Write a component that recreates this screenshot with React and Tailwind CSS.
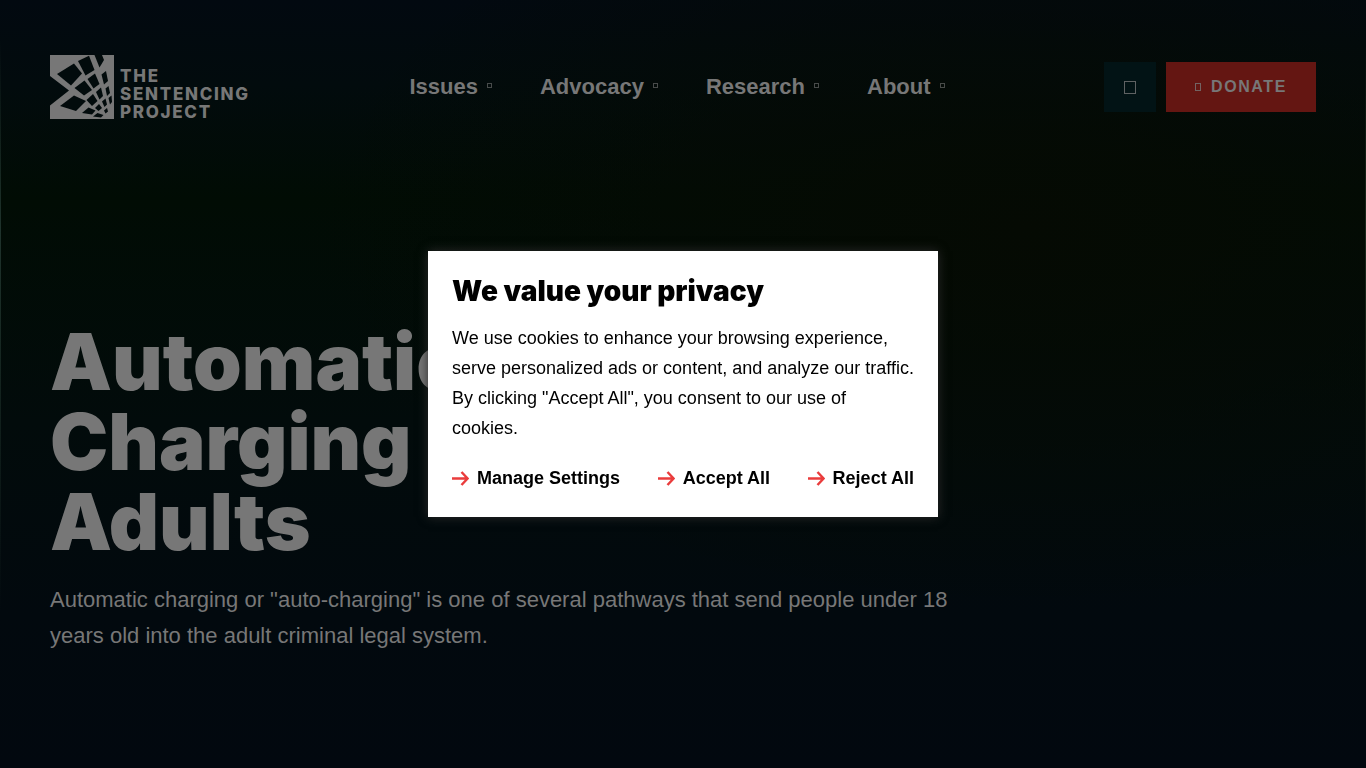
import { useState } from 'react'

const navItems = ['Issues', 'Advocacy', 'Research', 'About']

function Logo() {
    return (
        <a href="#" aria-label="The Sentencing Project" className="flex h-16 w-[200px] shrink-0 gap-[6px] text-[#777777]">
            <svg viewBox="0 0 64 64" className="h-16 w-16 shrink-0" aria-hidden="true">
                <path d="M0 0H64V64H0V50.500L19 35.500L0 21Z" fill="currentColor" />
                <g fill="#020b0c">
                    <path d="M7 19L24 8.500L32 18.500L21 30.500Z" />
                    <path d="M28 6L39 0.700L44.500 15L35.500 20.500Z" />
                    <path d="M44.500 0H52L54 5L49.500 12.500Z" />
                    <path d="M24.500 33L34.500 25.500L42 35L34 40.500Z" />
                    <path d="M37.500 24L45 18.500L49.500 29L43.500 33.500Z" />
                    <path d="M51.500 19.500L56 16L58 26L54 29.500Z" />
                    <path d="M10 51L24 40.500L36 46L26 56Z" />
                    <path d="M36.500 45L43 39L47.500 46L42 51Z" />
                    <path d="M46 37L51 32.500L53 41L49.500 44.500Z" />
                    <path d="M55.500 33.500L58.500 31L60 38L57 41Z" />
                    <path d="M32 58L38.500 52.500L45.500 55.500L42 59.500Z" />
                    <path d="M45 53L49 49L52 53L48.500 56Z" />
                    <path d="M52 46.500L55.500 43.500L57 49.500L54.500 52Z" />
                    <path d="M58.500 43L61.500 40.500L62 47L60 49.500Z" />
                    <path d="M43 61.500L47.500 58L53.500 60L51 62.500Z" />
                    <path d="M54 55.500L57 53L58 56.500L55.500 58.500Z" />
                </g>
            </svg>
            <span className="flex flex-col pt-3 font-['Inter',sans-serif] text-[17px] leading-[18px] font-extrabold tracking-widest">
                <span>THE</span>
                <span>SENTENCING</span>
                <span>PROJECT</span>
            </span>
        </a>
    )
}

function ArrowButton({ label, onClick }) {
    return (
        <button type="button" onClick={onClick} className="flex items-center gap-2 text-lg leading-[30px] font-bold whitespace-nowrap text-black">
            <svg viewBox="0 0 17 16" className="h-4 w-[17px]" fill="none" stroke="#ea3c3c" strokeWidth="2.5" aria-hidden="true">
                <path d="M0 8.500H15.500M9.500 2L15.600 8.500L9.500 15" />
            </svg>
            {label}
        </button>
    )
}

function PrivacyDialog({ onClose }) {
    return (
        <div className="fixed inset-0 flex items-center justify-center">
            <section role="dialog" aria-labelledby="privacyTitle" className="w-[510px] bg-white p-6 text-black shadow-[0_0_10px_#2b2b2b]">
                <h2 id="privacyTitle" className="font-['Inter',sans-serif] text-[28px] leading-8 font-black">We value your privacy</h2>
                <p className="mt-4 text-lg leading-[30px]">
                    We use cookies to enhance your browsing experience, serve personalized ads or content, and analyze our traffic. By clicking "Accept All", you consent to our use of cookies.
                </p>
                <div className="mt-5 flex justify-between">
                    <ArrowButton label="Manage Settings" />
                    <ArrowButton label="Accept All" onClick={onClose} />
                    <ArrowButton label="Reject All" onClick={onClose} />
                </div>
            </section>
        </div>
    )
}

export default function App() {
    const [open, setOpen] = useState(true)

    return (
        <div className="min-h-screen bg-[#02080f] bg-[linear-gradient(to_bottom,#02091000_5%,#1f332c_30%,#02091000_80%),linear-gradient(to_bottom,#02091000_5%,#1c2a1c_30%,#02091000_80%),radial-gradient(ellipse_at_75%_30%,#050a03_0%,#050a0300_50%),linear-gradient(to_bottom,#020910_0%,#020b0d_11%,#010c04_26%,#020b0b_55%,#02090e_80%,#02080f_100%)] bg-[size:1px_100%,1px_100%,100%_100%,100%_100%] bg-[position:left,right,center,center] bg-no-repeat font-['Liberation_Sans',Arial,sans-serif] text-[#777777]">
            <header className="flex items-center justify-between px-[50px] pt-[55px]">
                <Logo />
                <nav className="flex gap-12 text-[22px] leading-8 font-bold">
                    {navItems.map((item) => (
                        <a key={item} href="#" className="flex items-center gap-[9px]">
                            {item}
                            <span className="mb-[3px] h-[5px] w-[5px] border border-current opacity-60" />
                        </a>
                    ))}
                </nav>
                <div className="flex gap-[10px]">
                    <button type="button" aria-label="Search" className="flex h-[50px] w-[52px] items-center justify-center bg-[#021315]">
                        <span className="h-[13px] w-3 border border-current opacity-80" />
                    </button>
                    <a href="#" className="flex h-[50px] w-[150px] items-center justify-center gap-[10px] bg-[#641612] font-bold tracking-widest">
                        <span className="h-2 w-[6px] border border-current opacity-80" />
                        DONATE
                    </a>
                </div>
            </header>
            <main className="max-w-[1000px] px-[50px] pt-[203px] pb-16">
                <h1 className="max-w-[600px] font-['Inter',sans-serif] text-[78px] leading-[80px] font-black">
                    Automatic Charging Adults
                </h1>
                <p className="mt-5 text-[22px] leading-9">
                    Automatic charging or "auto-charging" is one of several pathways that send people under 18 years old into the adult criminal legal system.
                </p>
            </main>
            {open && <PrivacyDialog onClose={() => setOpen(false)} />}
        </div>
    )
}
